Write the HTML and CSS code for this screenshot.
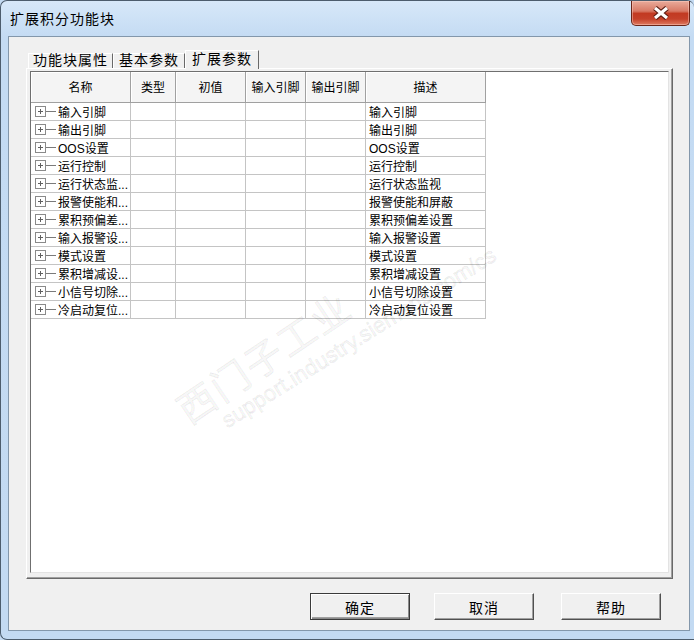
FILE: index.html
```html
<!DOCTYPE html>
<html lang="zh-CN">
<head>
    <meta charset="UTF-8">
    <title>扩展积分功能块</title>
    <link rel="stylesheet" href="styles.css">
</head>
<body>
    <div class="window">
        <div class="titlebar">
            <span class="title">扩展积分功能块</span>
            <div class="close">
                <svg width="18" height="14" viewBox="0 0 18 14">
                    <path d="M3 2 L15 12 M15 2 L3 12" stroke="#5b1c12" stroke-width="5.5" fill="none"/>
                    <path d="M3 2 L15 12 M15 2 L3 12" stroke="#ffffff" stroke-width="3.2" fill="none"/>
                </svg>
            </div>
        </div>

        <div class="client">
            <div class="tabs">
                <div class="tab tab-1">功能块属性</div>
                <div class="tab tab-2">基本参数</div>
                <div class="tab tab-3 active">扩展参数</div>
            </div>

            <div class="page">
                <div class="grid">
                    <div class="table">
                        <div class="th">名称</div>
                        <div class="th">类型</div>
                        <div class="th">初值</div>
                        <div class="th">输入引脚</div>
                        <div class="th">输出引脚</div>
                        <div class="th">描述</div>

                        <div class="td name"><svg class="node" width="21" height="11" viewBox="0 0 21 11"><rect x="0.5" y="0.5" width="10" height="10" fill="#fff" stroke="#8a8a8a"/><path d="M3 5.5 H8 M5.5 3 V8" stroke="#606060"/><path d="M11 5.5 H21" stroke="#7a7a7a"/></svg>输入引脚</div>
                        <div class="td"></div><div class="td"></div><div class="td"></div><div class="td"></div>
                        <div class="td desc">输入引脚</div>

                        <div class="td name"><svg class="node" width="21" height="11" viewBox="0 0 21 11"><rect x="0.5" y="0.5" width="10" height="10" fill="#fff" stroke="#8a8a8a"/><path d="M3 5.5 H8 M5.5 3 V8" stroke="#606060"/><path d="M11 5.5 H21" stroke="#7a7a7a"/></svg>输出引脚</div>
                        <div class="td"></div><div class="td"></div><div class="td"></div><div class="td"></div>
                        <div class="td desc">输出引脚</div>

                        <div class="td name"><svg class="node" width="21" height="11" viewBox="0 0 21 11"><rect x="0.5" y="0.5" width="10" height="10" fill="#fff" stroke="#8a8a8a"/><path d="M3 5.5 H8 M5.5 3 V8" stroke="#606060"/><path d="M11 5.5 H21" stroke="#7a7a7a"/></svg>OOS设置</div>
                        <div class="td"></div><div class="td"></div><div class="td"></div><div class="td"></div>
                        <div class="td desc">OOS设置</div>

                        <div class="td name"><svg class="node" width="21" height="11" viewBox="0 0 21 11"><rect x="0.5" y="0.5" width="10" height="10" fill="#fff" stroke="#8a8a8a"/><path d="M3 5.5 H8 M5.5 3 V8" stroke="#606060"/><path d="M11 5.5 H21" stroke="#7a7a7a"/></svg>运行控制</div>
                        <div class="td"></div><div class="td"></div><div class="td"></div><div class="td"></div>
                        <div class="td desc">运行控制</div>

                        <div class="td name"><svg class="node" width="21" height="11" viewBox="0 0 21 11"><rect x="0.5" y="0.5" width="10" height="10" fill="#fff" stroke="#8a8a8a"/><path d="M3 5.5 H8 M5.5 3 V8" stroke="#606060"/><path d="M11 5.5 H21" stroke="#7a7a7a"/></svg>运行状态监...</div>
                        <div class="td"></div><div class="td"></div><div class="td"></div><div class="td"></div>
                        <div class="td desc">运行状态监视</div>

                        <div class="td name"><svg class="node" width="21" height="11" viewBox="0 0 21 11"><rect x="0.5" y="0.5" width="10" height="10" fill="#fff" stroke="#8a8a8a"/><path d="M3 5.5 H8 M5.5 3 V8" stroke="#606060"/><path d="M11 5.5 H21" stroke="#7a7a7a"/></svg>报警使能和...</div>
                        <div class="td"></div><div class="td"></div><div class="td"></div><div class="td"></div>
                        <div class="td desc">报警使能和屏蔽</div>

                        <div class="td name"><svg class="node" width="21" height="11" viewBox="0 0 21 11"><rect x="0.5" y="0.5" width="10" height="10" fill="#fff" stroke="#8a8a8a"/><path d="M3 5.5 H8 M5.5 3 V8" stroke="#606060"/><path d="M11 5.5 H21" stroke="#7a7a7a"/></svg>累积预偏差...</div>
                        <div class="td"></div><div class="td"></div><div class="td"></div><div class="td"></div>
                        <div class="td desc">累积预偏差设置</div>

                        <div class="td name"><svg class="node" width="21" height="11" viewBox="0 0 21 11"><rect x="0.5" y="0.5" width="10" height="10" fill="#fff" stroke="#8a8a8a"/><path d="M3 5.5 H8 M5.5 3 V8" stroke="#606060"/><path d="M11 5.5 H21" stroke="#7a7a7a"/></svg>输入报警设...</div>
                        <div class="td"></div><div class="td"></div><div class="td"></div><div class="td"></div>
                        <div class="td desc">输入报警设置</div>

                        <div class="td name"><svg class="node" width="21" height="11" viewBox="0 0 21 11"><rect x="0.5" y="0.5" width="10" height="10" fill="#fff" stroke="#8a8a8a"/><path d="M3 5.5 H8 M5.5 3 V8" stroke="#606060"/><path d="M11 5.5 H21" stroke="#7a7a7a"/></svg>模式设置</div>
                        <div class="td"></div><div class="td"></div><div class="td"></div><div class="td"></div>
                        <div class="td desc">模式设置</div>

                        <div class="td name"><svg class="node" width="21" height="11" viewBox="0 0 21 11"><rect x="0.5" y="0.5" width="10" height="10" fill="#fff" stroke="#8a8a8a"/><path d="M3 5.5 H8 M5.5 3 V8" stroke="#606060"/><path d="M11 5.5 H21" stroke="#7a7a7a"/></svg>累积增减设...</div>
                        <div class="td"></div><div class="td"></div><div class="td"></div><div class="td"></div>
                        <div class="td desc">累积增减设置</div>

                        <div class="td name"><svg class="node" width="21" height="11" viewBox="0 0 21 11"><rect x="0.5" y="0.5" width="10" height="10" fill="#fff" stroke="#8a8a8a"/><path d="M3 5.5 H8 M5.5 3 V8" stroke="#606060"/><path d="M11 5.5 H21" stroke="#7a7a7a"/></svg>小信号切除...</div>
                        <div class="td"></div><div class="td"></div><div class="td"></div><div class="td"></div>
                        <div class="td desc">小信号切除设置</div>

                        <div class="td name"><svg class="node" width="21" height="11" viewBox="0 0 21 11"><rect x="0.5" y="0.5" width="10" height="10" fill="#fff" stroke="#8a8a8a"/><path d="M3 5.5 H8 M5.5 3 V8" stroke="#606060"/><path d="M11 5.5 H21" stroke="#7a7a7a"/></svg>冷启动复位...</div>
                        <div class="td"></div><div class="td"></div><div class="td"></div><div class="td"></div>
                        <div class="td desc">冷启动复位设置</div>
                    </div>

                    <!-- watermark over the grid -->
                    <div class="watermark wm-cn">西门子工业</div>
                    <div class="watermark wm-en">support.industry.siemens.com/cs</div>
                </div>
            </div>

            <div class="buttons">
                <div class="btn default">确定</div>
                <div class="btn">取消</div>
                <div class="btn help">帮助</div>
            </div>
        </div>
    </div>
</body>
</html>
```

FILE: styles.css
```css
/* Reset */
* {
    margin: 0;
    padding: 0;
    box-sizing: border-box;
}

body {
    width: 694px;
    height: 640px;
    overflow: hidden;
    background: #c3daf2;
    font-family: "Liberation Sans", "Noto Sans CJK SC", sans-serif;
    color: #000;
}

/* Window frame */
.window {
    width: 694px;
    height: 640px;
    background: linear-gradient(to bottom, #d7e8f9 0px, #c4dbf3 36px, #c3daf2 100%);
    border: 1px solid #4d5d6d;
    border-right: none;
    border-radius: 7px 7px 0 7px;
}

.titlebar {
    height: 35px;
    display: flex;
    align-items: flex-start;
    padding-left: 9px;
}

.title {
    align-self: center;
    margin-bottom: 2px;
    font-size: 14px;
    letter-spacing: 1px;
    color: #000;
}

.close {
    margin-left: auto;
    margin-right: 4px;
    width: 59px;
    height: 25px;
    border: 1px solid #6a2619;
    border-top: none;
    border-radius: 0 0 5px 5px;
    background: linear-gradient(to bottom, #e9ab9b 0%, #d87a66 42%, #c23a22 52%, #c5412a 75%, #de7a60 100%);
    box-shadow: inset 0 0 0 1px rgba(255, 210, 200, 0.45);
    display: flex;
    align-items: center;
    justify-content: center;
}

/* Client area */
.client {
    margin-left: 7px;
    width: 682px;
    height: 595px;
    background: #f0f0f0;
    border: 1px solid #8397ab;
    padding-top: 13px;
}

/* Tabs */
.tabs {
    display: flex;
    align-items: flex-end;
    height: 18px;
    margin-left: 19px;
    position: relative;
    z-index: 1;
}

.tab {
    height: 15px;
    border-left: 1px solid #ffffff;
    border-top: 1px solid #ffffff;
    border-right: 1px solid #696969;
    font-size: 14px;
    letter-spacing: 1px;
    line-height: 13px;
    text-align: center;
    background: #f0f0f0;
}

.tab-1 { width: 85px; }
.tab-2 { width: 72px; }
.tab-3 { width: 74px; }

.tab.active {
    height: 19px;
    margin-bottom: -1px;
    line-height: 16px;
}

.page {
    margin-left: 17px;
    width: 647px;
    height: 511px;
    border-top: 1px solid #ffffff;
    border-left: 1px solid #ffffff;
    border-right: 1px solid #696969;
    border-bottom: 1px solid #696969;
    box-shadow: inset -1px -1px 0 #a0a0a0;
    padding: 2px 3px 5px 3px;
}

/* Grid control */
.grid {
    position: relative;
    overflow: hidden;
    width: 639px;
    height: 502px;
    background: #ffffff;
    border-top: 1px solid #6f6f6f;
    border-left: 1px solid #6f6f6f;
    border-right: 1px solid #e3e3e3;
    border-bottom: 1px solid #e3e3e3;
}

.table {
    display: grid;
    grid-template-columns: 100px 45px 70px 60px 60px 120px;
    grid-template-rows: 31px;
    grid-auto-rows: 18px;
    width: 455px;
    font-size: 12px;
}

.th {
    background: #f4f4f4;
    border-right: 1px solid #a0a0a0;
    border-bottom: 1px solid #a0a0a0;
    box-shadow: inset 1px 1px 0 #ffffff;
    display: flex;
    align-items: center;
    justify-content: center;
    padding-bottom: 2px;
}

.td {
    border-right: 1px solid #c4c4c4;
    border-bottom: 1px solid #c4c4c4;
    display: flex;
    align-items: center;
    white-space: nowrap;
    overflow: hidden;
}

.td.name {
    padding-left: 4px;
}

.node {
    flex: none;
    margin-right: 2px;
}

.td.desc {
    padding-left: 3px;
}

/* Faint watermark lying over the grid */
.watermark {
    position: absolute;
    white-space: nowrap;
    pointer-events: none;
    color: rgba(0, 0, 0, 0.035);
    -webkit-text-stroke: 1px rgba(0, 0, 0, 0.07);
    transform: translate(-50%, -50%) rotate(-34deg);
}

.wm-cn {
    left: 232px;
    top: 284px;
    font-size: 38px;
    letter-spacing: 2px;
    font-family: "Noto Sans CJK SC", sans-serif;
}

.wm-en {
    left: 328px;
    top: 266px;
    font-size: 22px;
    transform: translate(-50%, -50%) rotate(-32deg);
}

/* Dialog buttons */
.buttons {
    display: flex;
    justify-content: flex-end;
    gap: 24px;
    margin-top: 14px;
    padding-right: 28px;
}

.btn {
    width: 100px;
    height: 27px;
    background: #f0f0f0;
    border-top: 1px solid #ffffff;
    border-left: 1px solid #ffffff;
    border-right: 1px solid #505050;
    border-bottom: 1px solid #505050;
    box-shadow: inset -1px -1px 0 #a0a0a0;
    font-size: 14px;
    letter-spacing: 1px;
    display: flex;
    align-items: center;
    justify-content: center;
}

.btn.default {
    border: 1px solid #3a3a3a;
    box-shadow: inset 1px 1px 0 #ffffff, inset -1px -1px 0 #8a8a8a, inset 0 -2px 0 #a0a0a0;
}

.btn.help {
    margin-left: 3px;
}
```
